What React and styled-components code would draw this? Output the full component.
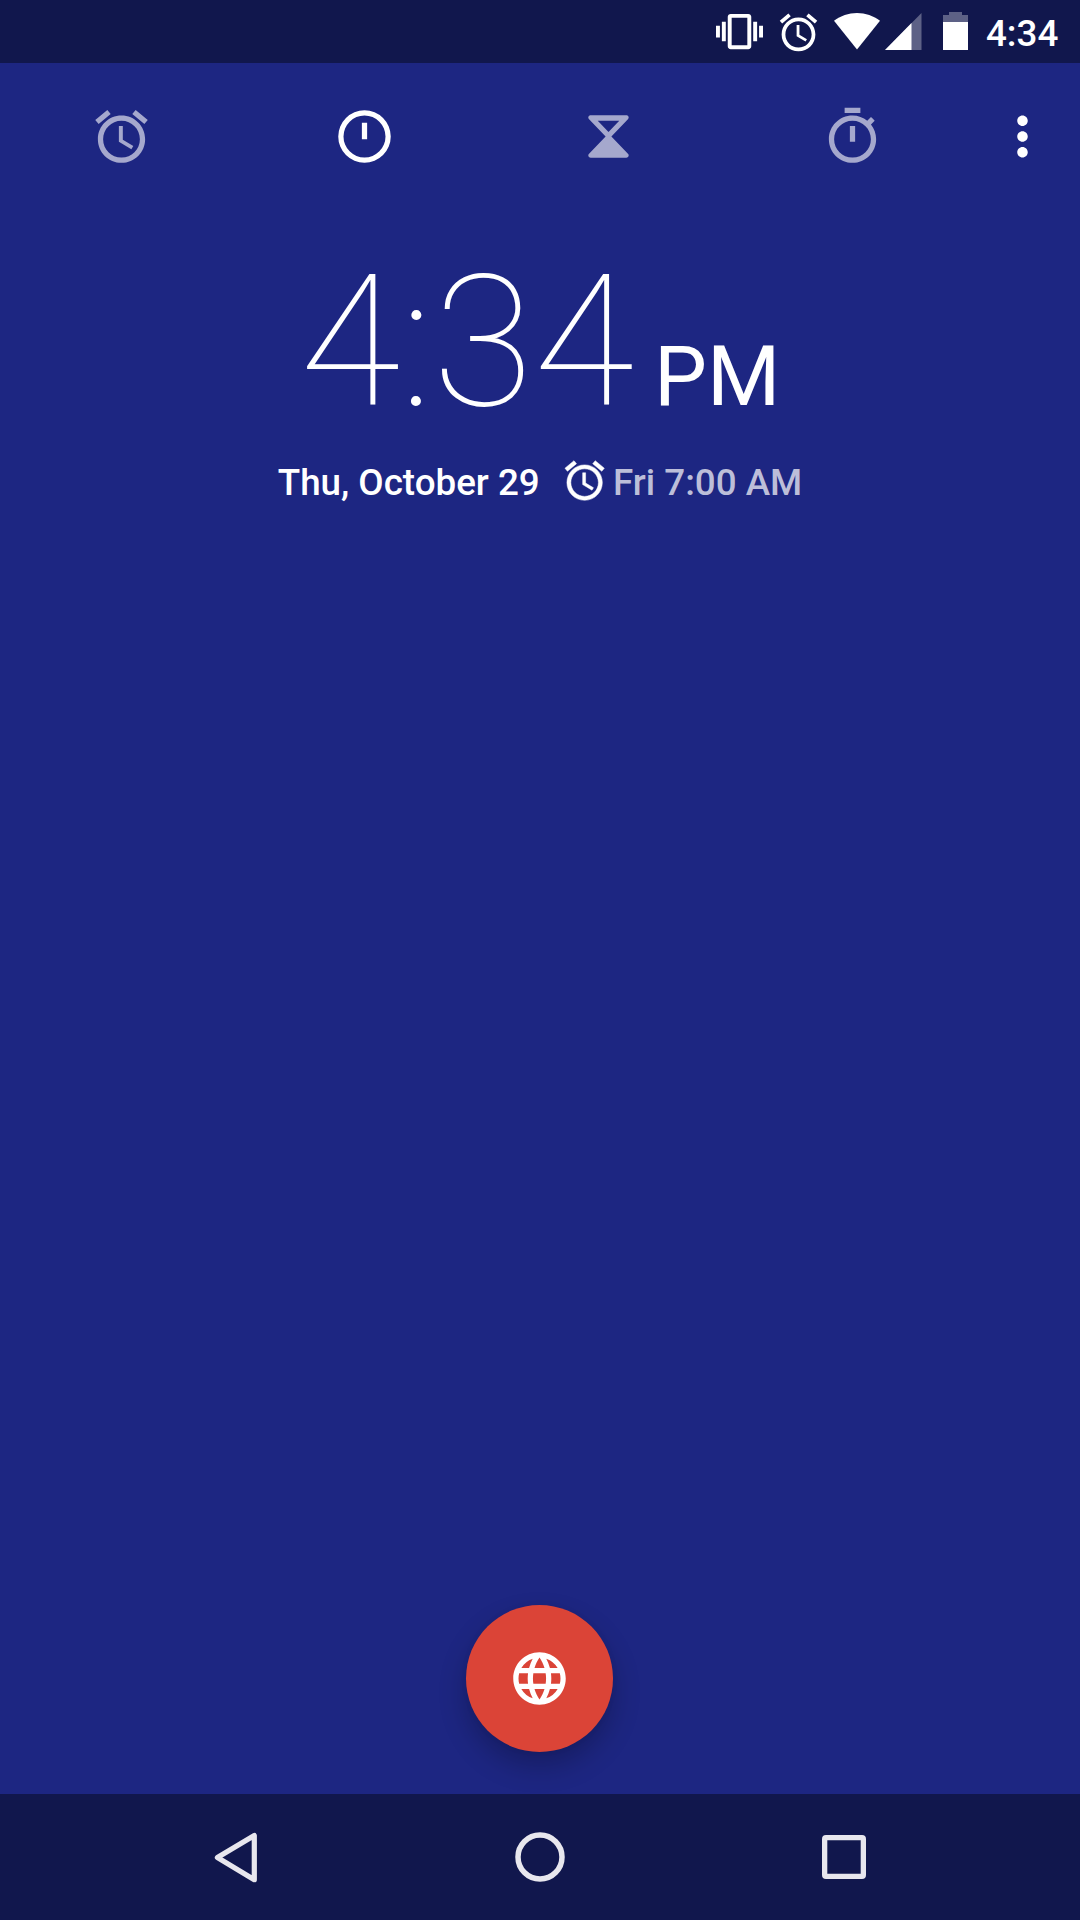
import React from "react";
import styled, { createGlobalStyle } from "styled-components";

const GlobalStyle = createGlobalStyle`
  html, body { margin: 0; padding: 0; background: #1d2682; }
  * { box-sizing: border-box; }
`;

const Screen = styled.div`
  width: 1080px;
  height: 1920px;
  display: flex;
  flex-direction: column;
  overflow: hidden;
  background: #1d2682;
  color: #fff;
  font-family: Roboto, "Noto Sans", sans-serif;
`;

const Glyph = styled.svg`
  display: block;
  flex: none;
  fill: currentColor;
  margin-left: ${(p) => p.$gap || 0}px;
  margin-top: ${(p) => p.$top || 0}px;
`;

const StatusBar = styled.header`
  height: 63px;
  flex: none;
  display: flex;
  align-items: flex-start;
  padding-left: 716px;
  background: #11174d;
`;

const StatusTime = styled.span`
  margin: 12px 0 0 18px;
  font-size: 36.75px;
  line-height: 44px;
  font-weight: 500;
  white-space: nowrap;
`;

const TabBar = styled.nav`
  height: 147px;
  flex: none;
  display: grid;
  grid-template-columns: 243px 243px 244.5px 244.5px 95px;
`;

const Tab = styled.button`
  height: 147px;
  padding: 0;
  border: 0;
  background: none;
  display: flex;
  align-items: center;
  justify-content: center;
  color: ${(p) => (p.$active ? "#fff" : "#a5a8cd")};
`;

const Content = styled.main`
  flex: 1;
  display: flex;
  flex-direction: column;
  align-items: center;
`;

const Clock = styled.div`
  margin-top: 25px;
  height: 216px;
  display: flex;
  align-items: baseline;
  white-space: nowrap;
`;

const Digits = styled.span`
  font-size: 183.75px;
  line-height: 216px;
  font-weight: 100;
`;

const Meridiem = styled.span`
  margin-left: 20px;
  font-size: 84px;
  line-height: 100px;
  font-weight: 400;
`;

const DateRow = styled.div`
  display: flex;
  align-items: center;
  margin-top: 7px;
  height: 48px;
  font-size: 36.75px;
  line-height: 46px;
  font-weight: 500;
  white-space: nowrap;
`;

const Today = styled.span`
  padding-top: 2px;
`;

const NextAlarm = styled(Today)`
  margin-left: 5px;
  color: #bcbed9;
`;

const AlarmMark = styled.span`
  display: block;
  margin: 0 0 2px 21px;
  stroke: currentColor;
  stroke-width: 0.25px;
`;

const Fab = styled.button`
  width: 147px;
  height: 147px;
  margin: auto 1px 42px 0;
  padding: 0;
  border: 0;
  border-radius: 50%;
  display: flex;
  align-items: center;
  justify-content: center;
  background: #db4437;
  color: #fff;
  box-shadow: 0 14px 28px rgba(0, 0, 0, 0.24), 0 0 6px rgba(0, 0, 0, 0.05);
`;

const NavBar = styled.footer`
  height: 126px;
  flex: none;
  display: flex;
  align-items: center;
  justify-content: center;
  background: #11174d;
  color: #e8e7ee;
`;

const NavKey = styled.button`
  width: 304px;
  height: 126px;
  padding: 0;
  border: 0;
  background: none;
  color: inherit;
  display: flex;
  align-items: center;
  justify-content: center;
`;

const ALARM =
  "M22 5.72l-4.6-3.86-1.29 1.53 4.6 3.86L22 5.72zM7.88 3.39L6.6 1.86 2 5.71l1.29 1.53 4.59-3.85zM12.5 8H11v6l4.75 2.85.75-1.23-4-2.37V8zM12 4c-4.97 0-9 4.03-9 9s4.02 9 9 9c4.97 0 9-4.03 9-9s-4.03-9-9-9zm0 16c-3.87 0-7-3.13-7-7s3.13-7 7-7 7 3.13 7 7-3.13 7-7 7z";
const VIBRATE =
  "M0 15h2V9H0v6zm3 2h2V7H3v10zm19-8v6h2V9h-2zm-3 8h2V7h-2v10zM16.5 3h-9C6.67 3 6 3.67 6 4.5v15c0 .83.67 1.5 1.5 1.5h9c.83 0 1.5-.67 1.5-1.5v-15c0-.83-.67-1.5-1.5-1.5zM16 19H8V5h8v14z";
const CLOCK =
  "M12 2a10 10 0 1 0 0 20a10 10 0 1 0 0-20zm0 18a8 8 0 1 1 0-16a8 8 0 1 1 0 16zM11 6.8h2v6.2h-2z";
const TIMER =
  "M5.2 3.9h13.6c.8 0 1.2.9.6 1.5L13.1 12l6.3 6.6c.6.6.2 1.5-.6 1.5H5.2c-.8 0-1.2-.9-.6-1.5L10.900 12 4.600 5.400C4 4.800 4.400 3.900 5.200 3.900zM7.900 6L12 10.300 16.100 6z";
const STOPWATCH =
  "M15 1H9v2h6V1zm-4 13h2V8h-2v6zm8.03-6.61l1.42-1.42c-.43-.51-.9-.99-1.41-1.41l-1.42 1.42C16.07 4.74 14.12 4 12 4c-4.97 0-9 4.03-9 9s4.02 9 9 9 9-4.03 9-9c0-2.12-.74-4.07-1.97-5.61zM12 20c-3.87 0-7-3.13-7-7s3.13-7 7-7 7 3.13 7 7-3.13 7-7 7z";
const MORE =
  "M12 8c1.1 0 2-.9 2-2s-.9-2-2-2-2 .9-2 2 .9 2 2 2zm0 2c-1.1 0-2 .9-2 2s.9 2 2 2 2-.9 2-2-.9-2-2-2zm0 6c-1.1 0-2 .9-2 2s.9 2 2 2 2-.9 2-2-.9-2-2-2z";
const GLOBE =
  "M11.99 2C6.47 2 2 6.48 2 12s4.47 10 9.99 10C17.52 22 22 17.52 22 12S17.52 2 11.99 2zm6.93 6h-2.95a15.65 15.65 0 0 0-1.38-3.56A8.03 8.03 0 0 1 18.92 8zM12 4.04c.83 1.2 1.48 2.53 1.91 3.96h-3.82c.43-1.43 1.08-2.76 1.91-3.96zM4.26 14C4.1 13.36 4 12.69 4 12s.1-1.36.26-2h3.38c-.08.66-.14 1.32-.14 2 0 .68.06 1.34.14 2H4.26zm.82 2h2.95c.32 1.25.78 2.45 1.38 3.56A7.987 7.987 0 0 1 5.08 16zm2.95-8H5.08a7.987 7.987 0 0 1 4.33-3.56A15.65 15.65 0 0 0 8.03 8zM12 19.96c-.83-1.2-1.48-2.53-1.91-3.96h3.82c-.43 1.43-1.08 2.76-1.91 3.96zM14.34 14H9.66c-.09-.66-.16-1.32-.16-2 0-.68.07-1.35.16-2h4.68c.09.65.16 1.32.16 2 0 .68-.07 1.34-.16 2zm.25 5.56c.6-1.11 1.06-2.31 1.38-3.56h2.95a8.03 8.03 0 0 1-4.33 3.56zM16.36 14c.08-.66.14-1.32.14-2 0-.68-.06-1.34-.14-2h3.38c.16.64.26 1.31.26 2s-.1 1.36-.26 2h-3.38z";

function Icon({ path, size, gap, top }) {
  return (
    <Glyph width={size} height={size} viewBox="0 0 24 24" $gap={gap} $top={top}>
      <path d={path} />
    </Glyph>
  );
}

const tabs = [
  { name: "Alarm", path: ALARM },
  { name: "Clock", path: CLOCK, active: true },
  { name: "Timer", path: TIMER },
  { name: "Stopwatch", path: STOPWATCH },
];

export default function App() {
  return (
    <Screen>
      <GlobalStyle />
      <StatusBar>
        <Icon path={VIBRATE} size={47} top={8} />
        <Icon path={ALARM} size={45} gap={12.5} top={9.5} />
        <Glyph width="46" height="37" viewBox="0 0 46 37" $gap={13.5} $top={12.7}>
          <path d="M23 36.6L0 7.8C6.5 2.8 14.5 0 23 0s16.5 2.8 23 7.8z" />
        </Glyph>
        <Glyph width="37" height="37" viewBox="0 0 37 37" $gap={4.7} $top={12.7}>
          <path opacity=".32" d="M36.5 0v37H0z" />
          <path d="M26.5 10.1V37H0z" />
        </Glyph>
        <Glyph width="25" height="38" viewBox="0 0 25 38" $gap={21.3} $top={12}>
          <path opacity=".32" d="M6 0h13v3h6v7H0V3h6z" />
          <path d="M0 10h25v28H0z" />
        </Glyph>
        <StatusTime>4:34</StatusTime>
      </StatusBar>
      <TabBar>
        {tabs.map((tab) => (
          <Tab key={tab.name} $active={tab.active} aria-label={tab.name}>
            <Icon path={tab.path} size={63} />
          </Tab>
        ))}
        <Tab $active aria-label="More options">
          <Icon path={MORE} size={63} />
        </Tab>
      </TabBar>
      <Content>
        <Clock>
          <Digits>4:34</Digits>
          <Meridiem>PM</Meridiem>
        </Clock>
        <DateRow>
          <Today>Thu, October 29</Today>
          <AlarmMark>
            <Icon path={ALARM} size={47.25} />
          </AlarmMark>
          <NextAlarm>Fri 7:00 AM</NextAlarm>
        </DateRow>
        <Fab aria-label="World clocks">
          <Icon path={GLOBE} size={63} />
        </Fab>
      </Content>
      <NavBar>
        <NavKey aria-label="Back">
          <Glyph width="44" height="51" viewBox="0 0 44 51">
            <path
              d="M40.3 3.5v44.2L3.4 25.6z"
              fill="none"
              stroke="currentColor"
              strokeWidth="5.2"
              strokeLinejoin="round"
            />
          </Glyph>
        </NavKey>
        <NavKey aria-label="Home">
          <Glyph width="50" height="50" viewBox="0 0 50 50">
            <circle cx="25" cy="25" r="22" fill="none" stroke="currentColor" strokeWidth="5.5" />
          </Glyph>
        </NavKey>
        <NavKey aria-label="Recents">
          <Glyph width="44" height="44" viewBox="0 0 44 44">
            <path
              fillRule="evenodd"
              d="M4 0h36a4 4 0 0 1 4 4v36a4 4 0 0 1-4 4H4a4 4 0 0 1-4-4V4a4 4 0 0 1 4-4zM5.3 5.3v33.4h33.4V5.3z"
            />
          </Glyph>
        </NavKey>
      </NavBar>
    </Screen>
  );
}
